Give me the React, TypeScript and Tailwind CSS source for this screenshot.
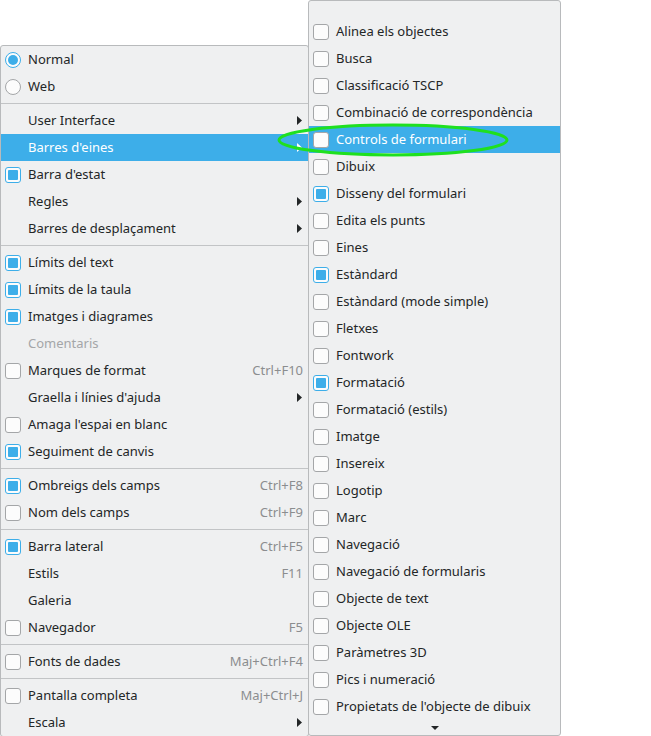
import React from "react";

type Item =
  | { kind: "sep" }
  | {
      kind: "item";
      label: string;
      mark?: "radio" | "radioOn" | "box" | "boxOn";
      shortcut?: string;
      sub?: boolean;
      active?: boolean;
      disabled?: boolean;
    };

const left: Item[] = [
  { kind: "item", label: "Normal", mark: "radioOn" },
  { kind: "item", label: "Web", mark: "radio" },
  { kind: "sep" },
  { kind: "item", label: "User Interface", sub: true },
  { kind: "item", label: "Barres d'eines", sub: true, active: true },
  { kind: "item", label: "Barra d'estat", mark: "boxOn" },
  { kind: "item", label: "Regles", sub: true },
  { kind: "item", label: "Barres de desplaçament", sub: true },
  { kind: "sep" },
  { kind: "item", label: "Límits del text", mark: "boxOn" },
  { kind: "item", label: "Límits de la taula", mark: "boxOn" },
  { kind: "item", label: "Imatges i diagrames", mark: "boxOn" },
  { kind: "item", label: "Comentaris", disabled: true },
  { kind: "item", label: "Marques de format", mark: "box", shortcut: "Ctrl+F10" },
  { kind: "item", label: "Graella i línies d'ajuda", sub: true },
  { kind: "item", label: "Amaga l'espai en blanc", mark: "box" },
  { kind: "item", label: "Seguiment de canvis", mark: "boxOn" },
  { kind: "sep" },
  { kind: "item", label: "Ombreigs dels camps", mark: "boxOn", shortcut: "Ctrl+F8" },
  { kind: "item", label: "Nom dels camps", mark: "box", shortcut: "Ctrl+F9" },
  { kind: "sep" },
  { kind: "item", label: "Barra lateral", mark: "boxOn", shortcut: "Ctrl+F5" },
  { kind: "item", label: "Estils", shortcut: "F11" },
  { kind: "item", label: "Galeria" },
  { kind: "item", label: "Navegador", mark: "box", shortcut: "F5" },
  { kind: "sep" },
  { kind: "item", label: "Fonts de dades", mark: "box", shortcut: "Maj+Ctrl+F4" },
  { kind: "sep" },
  { kind: "item", label: "Pantalla completa", mark: "box", shortcut: "Maj+Ctrl+J" },
  { kind: "item", label: "Escala", sub: true },
];

const rightLabels: [string, boolean][] = [
  ["Alinea els objectes", false],
  ["Busca", false],
  ["Classificació TSCP", false],
  ["Combinació de correspondència", false],
  ["Controls de formulari", false],
  ["Dibuix", false],
  ["Disseny del formulari", true],
  ["Edita els punts", false],
  ["Eines", false],
  ["Estàndard", true],
  ["Estàndard (mode simple)", false],
  ["Fletxes", false],
  ["Fontwork", false],
  ["Formatació", true],
  ["Formatació (estils)", false],
  ["Imatge", false],
  ["Insereix", false],
  ["Logotip", false],
  ["Marc", false],
  ["Navegació", false],
  ["Navegació de formularis", false],
  ["Objecte de text", false],
  ["Objecte OLE", false],
  ["Paràmetres 3D", false],
  ["Pics i numeració", false],
  ["Propietats de l'objecte de dibuix", false],
];

function Mark({ mark }: { mark?: string }) {
  if (mark === "box")
    return <div className="w-[16px] h-[16px] rounded-[3px] border border-[#a4a6a8] bg-[#fcfcfc] shrink-0" />;
  if (mark === "boxOn")
    return (
      <div className="w-[16px] h-[16px] rounded-[3px] border border-[#3daee9] bg-[#fcfcfc] p-[2px] shrink-0">
        <div className="w-full h-full rounded-[1px] bg-[#3daee9]" />
      </div>
    );
  if (mark === "radio")
    return <div className="w-[16px] h-[16px] rounded-full border border-[#a4a6a8] bg-[#fcfcfc] shrink-0" />;
  if (mark === "radioOn")
    return (
      <div className="w-[16px] h-[16px] rounded-full border border-[#3daee9] bg-[#fcfcfc] p-[2px] shrink-0">
        <div className="w-full h-full rounded-full bg-[#3daee9]" />
      </div>
    );
  return <div className="w-[16px] h-[16px] shrink-0" />;
}

function Arrow({ white }: { white?: boolean }) {
  return (
    <svg width="5" height="9" viewBox="0 0 5 9" className="shrink-0">
      <path d="M0 0 L5 4.5 L0 9 Z" fill={white ? "#ffffff" : "#232627"} />
    </svg>
  );
}

export default function App() {
  return (
    <div
      className="relative w-[651px] h-[736px] bg-white overflow-hidden text-[13px] text-[#232627]"
      style={{ fontFamily: '"Noto Sans", "DejaVu Sans", sans-serif' }}
    >
      {/* Left menu */}
      <div className="absolute left-0 top-[45px] w-[309px] h-[692px] border border-[#b8babc] rounded-[3px] bg-[#eff0f1] flex flex-col">
        {left.map((it, i) =>
          it.kind === "sep" ? (
            <div key={i} className="h-[7px] shrink-0 flex items-center">
              <div className="h-px w-full bg-[#c2c4c6]" />
            </div>
          ) : (
            <div
              key={i}
              className={
                "h-[27px] shrink-0 flex items-center pl-[4px] pr-[5px] gap-[7px] " +
                (it.active ? "bg-[#3daee9] text-white" : "")
              }
            >
              <Mark mark={it.mark} />
              <span className={"flex-1 whitespace-nowrap " + (it.disabled ? "text-[#a4a6a8]" : "")}>{it.label}</span>
              {it.shortcut && <span className="text-[#8b8d8f] whitespace-nowrap">{it.shortcut}</span>}
              {it.sub && (
                <div className="pr-[1px]">
                  <Arrow white={it.active} />
                </div>
              )}
            </div>
          )
        )}
      </div>

      {/* Right submenu */}
      <div className="absolute left-[308px] top-0 w-[253px] h-[736px] border border-[#b8babc] rounded-[3px] bg-[#eff0f1] flex flex-col pt-[17px]">
        {rightLabels.map(([label, on], i) => {
          const active = i === 4;
          return (
            <div
              key={i}
              className={
                "h-[27px] shrink-0 flex items-center pl-[4px] gap-[7px] " + (active ? "bg-[#3daee9] text-white" : "")
              }
            >
              <Mark mark={on ? "boxOn" : "box"} />
              <span className="whitespace-nowrap">{label}</span>
            </div>
          );
        })}
        <div className="flex-1 flex items-center justify-center">
          <svg width="8" height="4" viewBox="0 0 8 4">
            <path d="M0 0 L8 0 L4 4 Z" fill="#232627" />
          </svg>
        </div>
      </div>

      {/* Green annotation ellipse */}
      <svg className="absolute left-0 top-0 pointer-events-none" width="651" height="736">
        <ellipse cx="393" cy="140" rx="114" ry="15" fill="none" stroke="#1fe01f" strokeWidth="3" />
      </svg>
    </div>
  );
}
